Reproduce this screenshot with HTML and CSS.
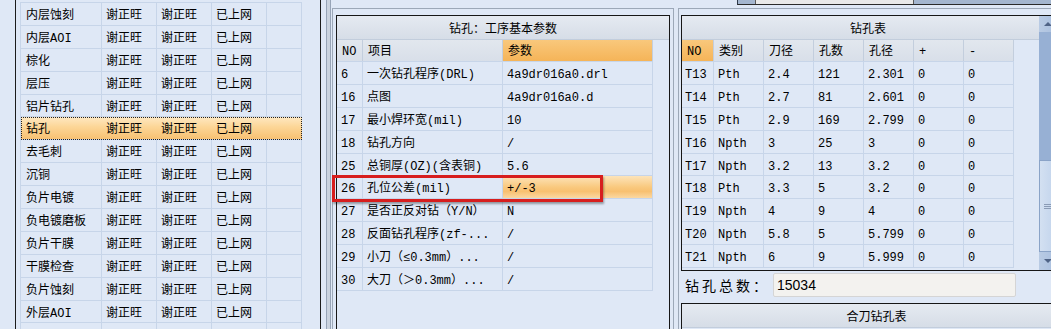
FILE: index.html
```html
<!DOCTYPE html>
<html lang="zh-CN">
<head>
<meta charset="utf-8">
<title>钻孔</title>
<link rel="stylesheet" href="styles.css">
</head>
<body>
<div class="app">
  <div class="left">
    <div class="lbox">
      <div class="ltable">
        <div class="lrow"><div class="c c1">内层蚀刻</div><div class="c c2">谢正旺</div><div class="c c2">谢正旺</div><div class="c c2">已上网</div><div class="c c5"></div></div>
        <div class="lrow"><div class="c c1">内层AOI</div><div class="c c2">谢正旺</div><div class="c c2">谢正旺</div><div class="c c2">已上网</div><div class="c c5"></div></div>
        <div class="lrow"><div class="c c1">棕化</div><div class="c c2">谢正旺</div><div class="c c2">谢正旺</div><div class="c c2">已上网</div><div class="c c5"></div></div>
        <div class="lrow"><div class="c c1">层压</div><div class="c c2">谢正旺</div><div class="c c2">谢正旺</div><div class="c c2">已上网</div><div class="c c5"></div></div>
        <div class="lrow"><div class="c c1">铝片钻孔</div><div class="c c2">谢正旺</div><div class="c c2">谢正旺</div><div class="c c2">已上网</div><div class="c c5"></div></div>
        <div class="lrow sel"><div class="c c1">钻孔</div><div class="c c2">谢正旺</div><div class="c c2">谢正旺</div><div class="c c2">已上网</div><div class="c c5"></div></div>
        <div class="lrow"><div class="c c1">去毛刺</div><div class="c c2">谢正旺</div><div class="c c2">谢正旺</div><div class="c c2">已上网</div><div class="c c5"></div></div>
        <div class="lrow"><div class="c c1">沉铜</div><div class="c c2">谢正旺</div><div class="c c2">谢正旺</div><div class="c c2">已上网</div><div class="c c5"></div></div>
        <div class="lrow"><div class="c c1">负片电镀</div><div class="c c2">谢正旺</div><div class="c c2">谢正旺</div><div class="c c2">已上网</div><div class="c c5"></div></div>
        <div class="lrow"><div class="c c1">负电镀磨板</div><div class="c c2">谢正旺</div><div class="c c2">谢正旺</div><div class="c c2">已上网</div><div class="c c5"></div></div>
        <div class="lrow"><div class="c c1">负片干膜</div><div class="c c2">谢正旺</div><div class="c c2">谢正旺</div><div class="c c2">已上网</div><div class="c c5"></div></div>
        <div class="lrow"><div class="c c1">干膜检查</div><div class="c c2">谢正旺</div><div class="c c2">谢正旺</div><div class="c c2">已上网</div><div class="c c5"></div></div>
        <div class="lrow"><div class="c c1">负片蚀刻</div><div class="c c2">谢正旺</div><div class="c c2">谢正旺</div><div class="c c2">已上网</div><div class="c c5"></div></div>
        <div class="lrow"><div class="c c1">外层AOI</div><div class="c c2">谢正旺</div><div class="c c2">谢正旺</div><div class="c c2">已上网</div><div class="c c5"></div></div>
        <div class="lrow"><div class="c c1"></div><div class="c c2"></div><div class="c c2"></div><div class="c c2"></div><div class="c c5"></div></div>
      </div>
    </div>
  </div>

  <div class="split"></div>

  <div class="mid">
    <div class="panel">
      <div class="cap">钻孔：工序基本参数</div>
      <div class="mtable">
        <div class="hrow"><div class="c m1">NO</div><div class="c m2">项目</div><div class="c m3 hl">参数</div></div>
        <div class="drow"><div class="c m1">6</div><div class="c m2">一次钻孔程序(DRL)</div><div class="c m3">4a9dr016a0.drl</div></div>
        <div class="drow"><div class="c m1">16</div><div class="c m2">点图</div><div class="c m3">4a9dr016a0.d</div></div>
        <div class="drow"><div class="c m1">17</div><div class="c m2">最小焊环宽(mil)</div><div class="c m3">10</div></div>
        <div class="drow"><div class="c m1">18</div><div class="c m2">钻孔方向</div><div class="c m3">/</div></div>
        <div class="drow"><div class="c m1">25</div><div class="c m2">总铜厚(OZ)(含表铜)</div><div class="c m3">5.6</div></div>
        <div class="drow"><div class="c m1">26</div><div class="c m2">孔位公差(mil)</div><div class="c m3 cur">+/-3</div></div>
        <div class="drow"><div class="c m1">27</div><div class="c m2">是否正反对钻（Y/N）</div><div class="c m3">N</div></div>
        <div class="drow"><div class="c m1">28</div><div class="c m2">反面钻孔程序(zf-...</div><div class="c m3">/</div></div>
        <div class="drow"><div class="c m1">29</div><div class="c m2">小刀（≤0.3mm）...</div><div class="c m3">/</div></div>
        <div class="drow"><div class="c m1">30</div><div class="c m2">大刀（＞0.3mm）...</div><div class="c m3">/</div></div>
      </div>
    </div>
  </div>

  <div class="right">
    <div class="strip"><div class="stripbox"></div></div>
    <div class="rgroup">
      <div class="rpanel">
        <div class="rcontent">
          <div class="cap rcap">钻孔表</div>
          <div class="rtable">
            <div class="hrow"><div class="c r1 hl">NO</div><div class="c r2">类别</div><div class="c r2">刀径</div><div class="c r2">孔数</div><div class="c r2">孔径</div><div class="c r2">+</div><div class="c r2">-</div></div>
            <div class="drow"><div class="c r1">T13</div><div class="c r2">Pth</div><div class="c r2">2.4</div><div class="c r2">121</div><div class="c r2">2.301</div><div class="c r2">0</div><div class="c r2">0</div></div>
            <div class="drow"><div class="c r1">T14</div><div class="c r2">Pth</div><div class="c r2">2.7</div><div class="c r2">81</div><div class="c r2">2.601</div><div class="c r2">0</div><div class="c r2">0</div></div>
            <div class="drow"><div class="c r1">T15</div><div class="c r2">Pth</div><div class="c r2">2.9</div><div class="c r2">169</div><div class="c r2">2.799</div><div class="c r2">0</div><div class="c r2">0</div></div>
            <div class="drow"><div class="c r1">T16</div><div class="c r2">Npth</div><div class="c r2">3</div><div class="c r2">25</div><div class="c r2">3</div><div class="c r2">0</div><div class="c r2">0</div></div>
            <div class="drow"><div class="c r1">T17</div><div class="c r2">Npth</div><div class="c r2">3.2</div><div class="c r2">13</div><div class="c r2">3.2</div><div class="c r2">0</div><div class="c r2">0</div></div>
            <div class="drow"><div class="c r1">T18</div><div class="c r2">Pth</div><div class="c r2">3.3</div><div class="c r2">5</div><div class="c r2">3.2</div><div class="c r2">0</div><div class="c r2">0</div></div>
            <div class="drow"><div class="c r1">T19</div><div class="c r2">Npth</div><div class="c r2">4</div><div class="c r2">9</div><div class="c r2">4</div><div class="c r2">0</div><div class="c r2">0</div></div>
            <div class="drow"><div class="c r1">T20</div><div class="c r2">Npth</div><div class="c r2">5.8</div><div class="c r2">5</div><div class="c r2">5.799</div><div class="c r2">0</div><div class="c r2">0</div></div>
            <div class="drow"><div class="c r1">T21</div><div class="c r2">Npth</div><div class="c r2">6</div><div class="c r2">9</div><div class="c r2">5.999</div><div class="c r2">0</div><div class="c r2">0</div></div>
          </div>
        </div>
        <div class="sbar">
          <div class="sbtn"><span class="tri up"></span></div>
          <div class="strack"></div>
          <div class="sthumb"><span class="grip"></span></div>
          <div class="sbtn dn"><span class="tri down"></span></div>
        </div>
      </div>
      <div class="total">
        <div class="tlabel">钻孔总数：</div>
        <div class="tinput">15034</div>
      </div>
      <div class="bpanel">
        <div class="cap rcap">合刀钻孔表</div>
      </div>
    </div>
  </div>

  <div class="mark"></div>
</div>
</body>
</html>
```

FILE: styles.css
```css
* { box-sizing: border-box; }
html, body { margin: 0; padding: 0; }
body {
  width: 1051px;
  height: 329px;
  overflow: hidden;
  background: #dfe8f6;
  font: 12px "Liberation Mono", "Noto Sans CJK SC", monospace;
  color: #000;
}
.app {
  position: relative;
  display: flex;
  height: 329px;
  overflow: hidden;
}

/* ---------- left list ---------- */
.left { flex: none; width: 321px; padding-left: 15px; height: 100%; }
.lbox {
  height: 100%;
  border-left: 1px solid #1b1b1b;
  border-right: 1px solid #1b1b1b;
  padding: 2px 0 0 4px;
}
.ltable {
  width: 282px;
  border-top: 1px solid #c7d5e9;
  border-left: 1px solid #c7d5e9;
}
.lrow {
  display: flex;
  height: 22.9px;
  border-bottom: 1px solid #c7d5e9;
}
.c {
  flex: none;
  white-space: nowrap;
  overflow: hidden;
  padding-top: 2px;
  line-height: 22px;
  padding-left: 4px;
  border-right: 1px solid #c7d5e9;
}
.c1 { width: 81px; padding-left: 5px; }
.c2 { width: 55px; }
.c5 { width: 35px; }
.lrow.sel {
  background: linear-gradient(#fee8c2, #fcd697 45%, #f8c172);
  outline: 1px dotted #222;
  outline-offset: -1px;
}
.lrow.sel .c { border-right-color: transparent; }

/* ---------- splitter ---------- */
.split {
  flex: none;
  width: 11px;
  background: linear-gradient(to right, transparent 5px, #97a4b7 5px, #97a4b7 6px, #cad3df 6px, #cad3df 9px, #97a4b7 9px, #97a4b7 10px, transparent 10px);
}

/* ---------- middle ---------- */
.mid {
  flex: none;
  width: 342px;
  margin-top: 8px;
  border: 1px solid #9ca8b8;
  border-bottom: 0;
  padding: 6px 3px 0;
}
.panel {
  border: 1px solid #161616;
  height: 330px;
}
.cap {
  height: 24px;
  padding-top: 1px;
  line-height: 22px;
  text-align: center;
  background: linear-gradient(#e5eaf1, #d6dde7);
  border-bottom: 1px solid #c2cddc;
  font-family: "Noto Sans CJK SC", sans-serif;
}
.mtable { width: 316px; }
.hrow {
  display: flex;
  height: 22px;
  border-bottom: 1px solid #c7d5e9;
  background: linear-gradient(#e2e7ee, #d8dfe9);
}
.hrow .c { line-height: 21px; padding-top: 2px; padding-left: 5px; border-right-color: #c3cedd; }
.drow {
  display: flex;
  height: 22.9px;
  border-bottom: 1px solid #c7d5e9;
}
.m1 { width: 26px; }
.m2 { width: 140px; }
.m3 { width: 150px; }
.hl { background: linear-gradient(#f9c87c, #f5b458); }
.cur { background: linear-gradient(#fde4ba, #f9c97f 50%, #f8c070 70%, #fbd8a2); }

/* ---------- right ---------- */
.right { flex: none; width: 400px; margin-left: 4px; }
.strip {
  height: 5px;
  margin-left: 59px;
  background: #a4b6cf;
  border-left: 1px solid #2e3a4a;
  border-bottom: 1px solid #2a2a2a;
  padding-left: 17px;
}
.stripbox {
  width: 159px;
  height: 100%;
  background: #e9e9e9;
  border-left: 1px solid #5a5a5a;
  border-right: 1px solid #5a5a5a;
}
.rgroup {
  margin-top: 3px;
  border-left: 1px solid #9ca8b8;
  border-top: 1px solid #9ca8b8;
  padding: 6px 0 0 2px;
}
.rpanel {
  display: flex;
  width: 376px;
  height: 256px;
  border: 1px solid #161616;
}
.rcontent { flex: none; width: 357px; }
.rcap { padding-left: 15px; }
.rtable { width: 332px; }
.r1 { width: 32px; padding-left: 3px; }
.r2 { width: 50px; }
.hrow .r1 { padding-left: 5px; }

.sbar {
  flex: none;
  width: 17px;
  display: flex;
  flex-direction: column;
  background: #9ab2d5;
}
.sbtn {
  height: 16px;
  display: flex;
  justify-content: center;
  align-items: center;
  background: linear-gradient(to right, #b9cbe4, #a9bfde);
}
.sbtn.dn { height: 18px; }
.tri { width: 0; height: 0; border-left: 4px solid transparent; border-right: 4px solid transparent; }
.tri.up { border-bottom: 4px solid #4f6386; }
.tri.down { border-top: 4px solid #4f6386; }
.strack { height: 128px; background: #97b0d4; }
.sthumb {
  height: 92px;
  display: flex;
  justify-content: center;
  align-items: center;
  background: linear-gradient(to right, #d3e0f1, #c2d4ec);
  border: 1px solid #8aa3c7;
}
.grip {
  width: 8px;
  height: 5px;
  border-top: 1px solid #8a9bb5;
  border-bottom: 1px solid #8a9bb5;
  position: relative;
}
.grip::after {
  content: "";
  position: absolute;
  left: 0; right: 0; top: 1px;
  border-top: 1px solid #8a9bb5;
}

.total {
  display: flex;
  align-items: flex-start;
  height: 32px;
  padding: 2px 0 0 1px;
}
.tlabel {
  width: 91px;
  padding-left: 3px;
  font: 14px/24px "Noto Sans CJK SC", sans-serif;
  letter-spacing: 3px;
  white-space: nowrap;
}
.tinput {
  width: 243px;
  height: 24px;
  background: #f3f2ef;
  border: 1px solid #d5d5d5;
  border-radius: 2px;
  padding-left: 3px;
  font: 14px/22px "Liberation Sans", sans-serif;
}
.bpanel {
  width: 376px;
  height: 40px;
  border: 1px solid #161616;
  border-bottom: 0;
}

/* ---------- annotation ---------- */
.mark {
  position: absolute;
  left: 332px;
  top: 175px;
  width: 271px;
  height: 27px;
  border: 3px solid #d71e1e;
  box-shadow: 1px 2px 2px rgba(0, 0, 0, 0.35);
}
```
